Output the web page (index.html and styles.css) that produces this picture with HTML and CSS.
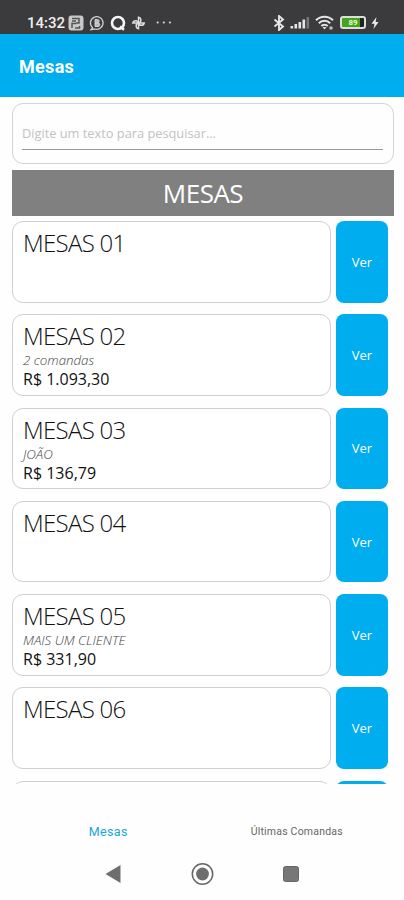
FILE: index.html
```html
<!DOCTYPE html>
<html lang="pt-BR">
<head>
    <meta charset="UTF-8">
    <meta name="viewport" content="width=device-width, initial-scale=1.0">
    <title>Mesas</title>
    <link rel="stylesheet" href="styles.css">
</head>
<body>

    <div class="status-bar">
        <span class="clock">14:32</span>
        <div class="status-left">
            <svg width="16" height="16" viewBox="0 0 16 16">
                <rect x="0.5" y="0.5" width="15" height="15" rx="3" fill="#c9c9c9"/>
                <path d="M4 13V8.5h4M4 3.5h7v4.5H8M4 6h4M11.5 11v2H7" fill="none" stroke="#555" stroke-width="1.5"/>
            </svg>
            <svg width="16" height="16" viewBox="0 0 16 16">
                <path d="M3.5 12.6A6.3 6.3 0 1 1 6 14L2 14.6z" fill="none" stroke="#d0d0d0" stroke-width="1.3"/>
                <path d="M6 4.5h2.5a1.7 1.7 0 0 1 0 3.4H6zM6 7.9h3a1.8 1.8 0 0 1 0 3.6H6z" fill="#bbb" stroke="#d0d0d0"/>
            </svg>
            <svg width="16" height="16" viewBox="0 0 16 16">
                <circle cx="8" cy="8" r="6" fill="none" stroke="#f5f5f5" stroke-width="2.6"/>
                <path d="M10 11.5l4 3.3" stroke="#f5f5f5" stroke-width="2.4"/>
            </svg>
            <svg width="16" height="16" viewBox="0 0 16 16" fill="none" stroke="#ddd" stroke-width="1.5">
                <path d="M7.5 8V2.3a2.9 2.9 0 0 1 0 5.7z"/>
                <path d="M7.5 8h5.7a2.9 2.9 0 0 1-5.7 0z"/>
                <path d="M7.5 8v5.7a2.9 2.9 0 0 1 0-5.7z"/>
                <path d="M7.5 8H1.8a2.9 2.9 0 0 1 5.7 0z"/>
            </svg>
            <svg class="dots" width="16" height="16" viewBox="0 0 16 16" fill="#ddd">
                <circle cx="1.7" cy="7.5" r="1.1"/>
                <circle cx="7.8" cy="7.5" r="1.1"/>
                <circle cx="13.9" cy="7.5" r="1.1"/>
            </svg>
        </div>
        <div class="status-right">
            <svg width="12" height="16" viewBox="0 0 12 16">
                <path d="M1.5 4.5l8.5 7L6 15V1l4 3.5-8.5 7" fill="none" stroke="#e6e6e6" stroke-width="1.9"/>
            </svg>
            <svg width="20" height="16" viewBox="0 0 20 16" fill="#e6e6e6">
                <rect x="0.5" y="11" width="2.6" height="2.5"/>
                <rect x="4.5" y="9" width="2.6" height="4.5"/>
                <rect x="8.5" y="7" width="2.6" height="6.5"/>
                <rect x="12.5" y="4.5" width="2.6" height="9"/>
                <rect x="16.5" y="2" width="2.6" height="11.5" fill="#777"/>
            </svg>
            <svg width="19" height="16" viewBox="0 0 19 16">
                <path d="M1 5.2a12 12 0 0 1 17 0M3.8 8.2a8 8 0 0 1 11.4 0M6.3 11a4.5 4.5 0 0 1 6.4 0" fill="none" stroke="#e6e6e6" stroke-width="2"/>
                <path d="M7.5 12l2 2.5 2-2.5z" fill="#e6e6e6"/>
                <circle cx="16" cy="13" r="1.8" fill="#bbb"/>
            </svg>
            <div class="battery">89</div>
            <svg class="bolt" width="8" height="14" viewBox="0 0 8 14">
                <path d="M5.5 1L0.5 7.8h3L2.5 13 7.5 6H4.6z" fill="#eee"/>
            </svg>
        </div>
    </div>

    <div class="header">Mesas</div>

    <div class="content">
        <div class="search">
            <input type="text" placeholder="Digite um texto para pesquisar...">
        </div>

        <div class="section-title">MESAS</div>

        <div class="list">
            <div class="row">
                <div class="card">
                    <div class="name">MESAS 01</div>
                </div>
                <button>Ver</button>
            </div>
            <div class="row">
                <div class="card">
                    <div class="name">MESAS 02</div>
                    <div class="info">2 comandas</div>
                    <div class="price">R$ 1.093,30</div>
                </div>
                <button>Ver</button>
            </div>
            <div class="row">
                <div class="card">
                    <div class="name">MESAS 03</div>
                    <div class="info">JOÃO</div>
                    <div class="price">R$ 136,79</div>
                </div>
                <button>Ver</button>
            </div>
            <div class="row">
                <div class="card">
                    <div class="name">MESAS 04</div>
                </div>
                <button>Ver</button>
            </div>
            <div class="row">
                <div class="card">
                    <div class="name">MESAS 05</div>
                    <div class="info">MAIS UM CLIENTE</div>
                    <div class="price">R$ 331,90</div>
                </div>
                <button>Ver</button>
            </div>
            <div class="row">
                <div class="card">
                    <div class="name">MESAS 06</div>
                </div>
                <button>Ver</button>
            </div>
            <div class="row">
                <div class="card"></div>
                <button></button>
            </div>
        </div>
    </div>

    <div class="tabs">
        <div class="tab active"><span>Mesas</span></div>
        <div class="tab"><span>Últimas Comandas</span></div>
    </div>

    <div class="nav-bar">
        <svg width="24" height="24" viewBox="0 0 24 24">
            <path d="M4.5 12L19.5 3v18z" fill="#6e6e6e"/>
        </svg>
        <svg width="24" height="24" viewBox="0 0 24 24">
            <circle cx="12.5" cy="12" r="10.2" fill="none" stroke="#666" stroke-width="1.5"/>
            <circle cx="12.5" cy="12" r="6.4" fill="#6e6e6e"/>
        </svg>
        <svg width="24" height="24" viewBox="0 0 24 24">
            <rect x="4.5" y="4.5" width="15" height="15" rx="2" fill="#777" stroke="#666"/>
        </svg>
    </div>

</body>
</html>
```

FILE: styles.css
```css
* {
    box-sizing: border-box;
}

body {
    margin: 0;
    height: 900px;
    display: flex;
    flex-direction: column;
    overflow: hidden;
    background-color: #fefefe;
    font-family: "Open Sans", "Noto Sans", sans-serif;
}

.status-bar {
    height: 34px;
    padding: 11px 25px 0 27px;
    display: flex;
    align-items: center;
    background-color: #3b3a3c;
    color: #eee;
}

.clock {
    width: 41px;
    font: 500 15px/22px Roboto, sans-serif;
}

.status-left {
    display: flex;
    gap: 5px;
}

.dots {
    margin-left: 4px;
}

.status-right {
    margin-left: auto;
    display: flex;
    align-items: center;
    gap: 5px;
}

.battery {
    width: 26px;
    height: 13px;
    margin-left: 1px;
    border: 2px solid #ddd;
    border-radius: 3px;
    background: linear-gradient(to right, #43a51c 82%, #222 82%);
    color: #e8ffd8;
    font: bold 8px/9px Roboto, sans-serif;
    text-align: center;
}

.header {
    height: 63px;
    padding-left: 19px;
    background-color: #00adef;
    color: white;
    font: bold 18px/66px Roboto, sans-serif;
    letter-spacing: 0.3px;
}

.content {
    height: 687px;
    padding: 6px 10px 0 12px;
    overflow: hidden;
}

.search {
    height: 61px;
    padding: 17px 10px 0 9px;
    border: 1px solid #d4d4d4;
    border-radius: 11px;
}

.search input {
    display: block;
    width: 100%;
    height: 29px;
    padding: 0 0 4px 0;
    border: none;
    border-bottom: 1px solid #999;
    outline: none;
    background: none;
    font: 12.8px "Open Sans", "Noto Sans", sans-serif;
}

.search input::placeholder {
    color: #c2c2c2;
}

.section-title {
    height: 46px;
    margin: 6px 0 5px;
    background-color: #808080;
    color: white;
    font-size: 26px;
    letter-spacing: -0.5px;
    line-height: 47px;
    text-align: center;
}

.list {
    display: flex;
    flex-direction: column;
    gap: 11.8px;
}

.row {
    display: flex;
    gap: 5px;
    height: 81.5px;
}

.card {
    width: 319px;
    padding: 5px 10px 0;
    border: 1px solid #cfcfcf;
    border-radius: 11px;
    background-color: white;
}

.name {
    color: #111;
    font-size: 24px;
    font-weight: 300;
    letter-spacing: -0.7px;
    line-height: 32px;
}

.info {
    color: #444;
    font-size: 13.3px;
    font-style: italic;
    font-weight: 300;
    line-height: 17px;
}

.price {
    color: #111;
    font-size: 16px;
    font-weight: 500;
    line-height: 21px;
}

button {
    width: 52px;
    padding: 0;
    border: none;
    border-radius: 8px;
    background-color: #00adef;
    color: white;
    font: 500 13px "Open Sans", "Noto Sans", sans-serif;
}

.tabs {
    height: 64px;
    padding: 0 13px 0 14px;
    display: flex;
}

.tab {
    flex: 1;
    padding-top: 38px;
    color: #666;
    font: 10.5px/20px Roboto, sans-serif;
    letter-spacing: 0.2px;
    text-align: center;
}

.active {
    color: #1ba4e0;
    font-size: 12.5px;
    letter-spacing: 0.4px;
}

.nav-bar {
    padding: 14px 101px 0 101px;
    display: flex;
    justify-content: space-between;
}
```
